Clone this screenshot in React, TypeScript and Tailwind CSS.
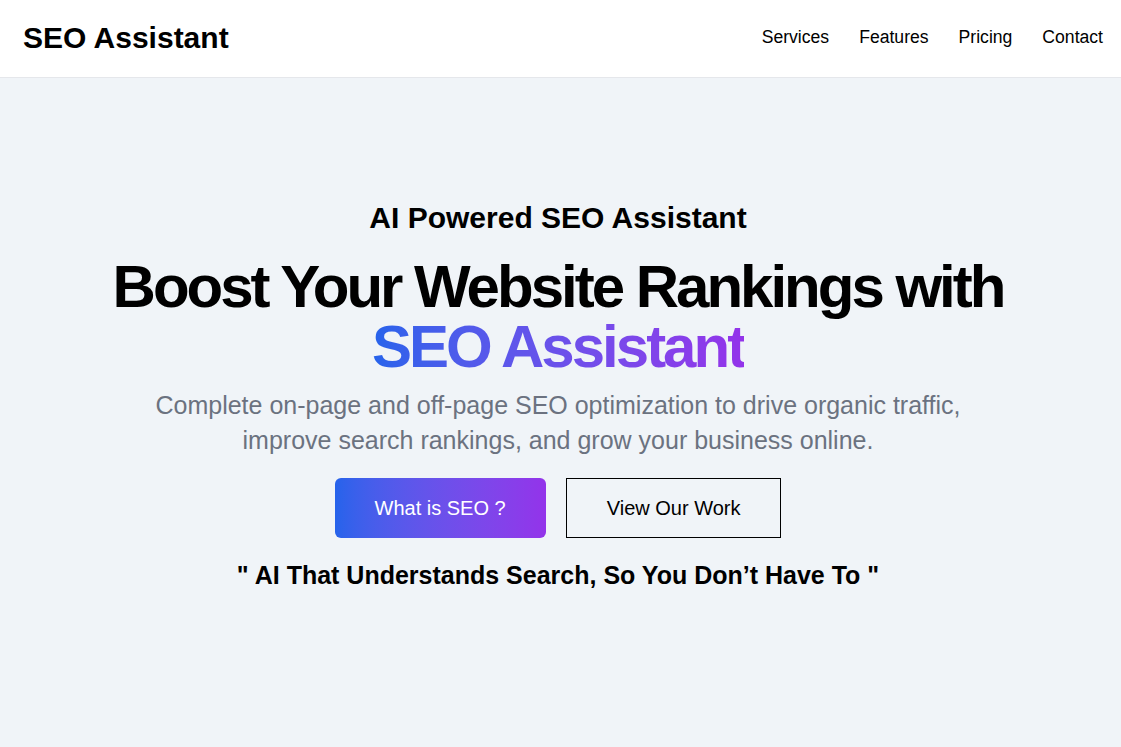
const navLinks = ['Services', 'Features', 'Pricing', 'Contact'];

const Header = () => {
  return (
    <header className="h-[78px] bg-white border-b border-gray-200 flex items-center justify-between pl-[23px] pr-[18px] pb-0.5">
      <a href="#" className="text-[30px] font-bold text-black leading-none">
        SEO Assistant
      </a>
      <nav className="flex items-center gap-[30px]">
        {navLinks.map((link) => (
          <a key={link} href="#" className="text-[17.6px] text-black">
            {link}
          </a>
        ))}
      </nav>
    </header>
  );
};

const Hero = () => {
  return (
    <section className="min-h-[669px] bg-[#f0f4f8] flex flex-col items-center pt-[122px] pr-[5px] text-center">
      <h2 className="text-[30px] leading-[36px] font-bold text-black">
        AI Powered SEO Assistant
      </h2>
      <h1 className="mt-[21px] text-[60px] leading-none font-bold tracking-tighter text-black">
        Boost Your Website Rankings with
        <br />
        <span className="bg-linear-to-r from-[#2563eb] to-[#9333ea] bg-clip-text text-transparent">
          SEO Assistant
        </span>
      </h1>
      <p className="mt-[11px] max-w-[880px] text-[25px] leading-[35px] text-[#6b7280]">
        Complete on-page and off-page SEO optimization to drive organic traffic,
        improve search rankings, and grow your business online.
      </p>
      <div className="mt-5 flex items-center gap-5">
        <button className="px-10 py-4 text-[20px] leading-[28px] text-white rounded-md bg-linear-to-r from-[#2563eb] to-[#9333ea]">
          What is SEO ?
        </button>
        <button className="px-10 py-[15px] text-[20px] leading-[28px] text-black border border-black">
          View Our Work
        </button>
      </div>
      <p className="mt-[22px] text-[25px] leading-[30px] font-bold text-black">
        " AI That Understands Search, So You Don’t Have To "
      </p>
    </section>
  );
};

export default function App() {
  return (
    <div className="font-['Liberation_Sans',Arial,sans-serif]">
      <Header />
      <Hero />
    </div>
  );
}
